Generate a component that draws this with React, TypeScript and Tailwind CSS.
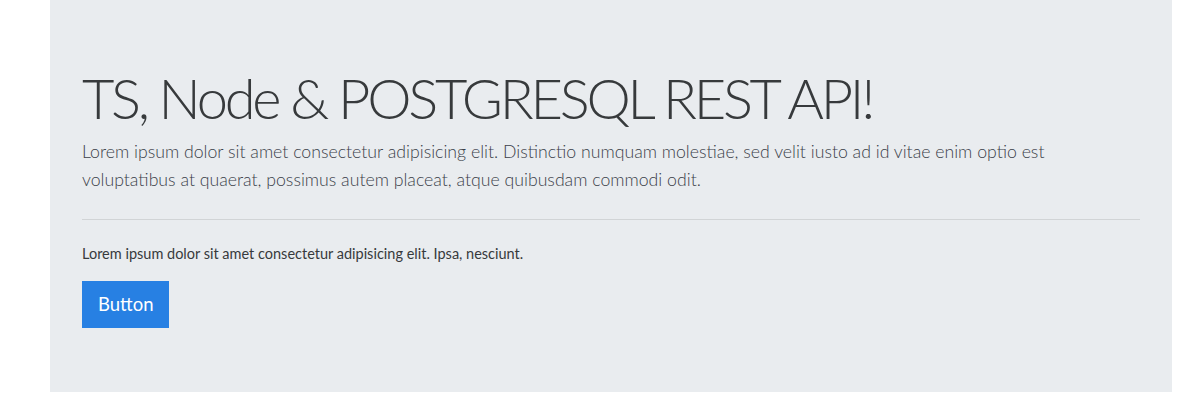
export default function App() {
  return (
    <main className="min-h-screen bg-white font-['Lato','Noto_Sans',sans-serif] text-[#373a3c]">
      <div className="pl-[50px] pr-[28px]">
        <section className="bg-[#e9ecef] px-8 pt-16 pb-16">
          <h1 className="text-[56px] font-light leading-[67px] tracking-[-0.058em]">
            TS, Node &amp; POSTGRESQL REST API!
          </h1>
          <p className="mt-[7px] text-[17.7px] font-light leading-[28px] text-[#3b3f4a]">
            Lorem ipsum dolor sit amet consectetur adipisicing elit. Distinctio numquam molestiae, sed velit iusto ad id vitae enim optio est voluptatibus at quaerat, possimus autem placeat, atque quibusdam commodi odit.
          </p>
          <hr className="mt-[25px] mb-[22px] border-t border-black/10" />
          <p className="text-[14.5px] leading-[24px]">
            Lorem ipsum dolor sit amet consectetur adipisicing elit. Ipsa, nesciunt.
          </p>
          <button className="mt-[15px] bg-[#2780e3] px-4 py-2 text-[18.5px] leading-[31px] text-white">
            Button
          </button>
        </section>
      </div>
    </main>
  );
}
